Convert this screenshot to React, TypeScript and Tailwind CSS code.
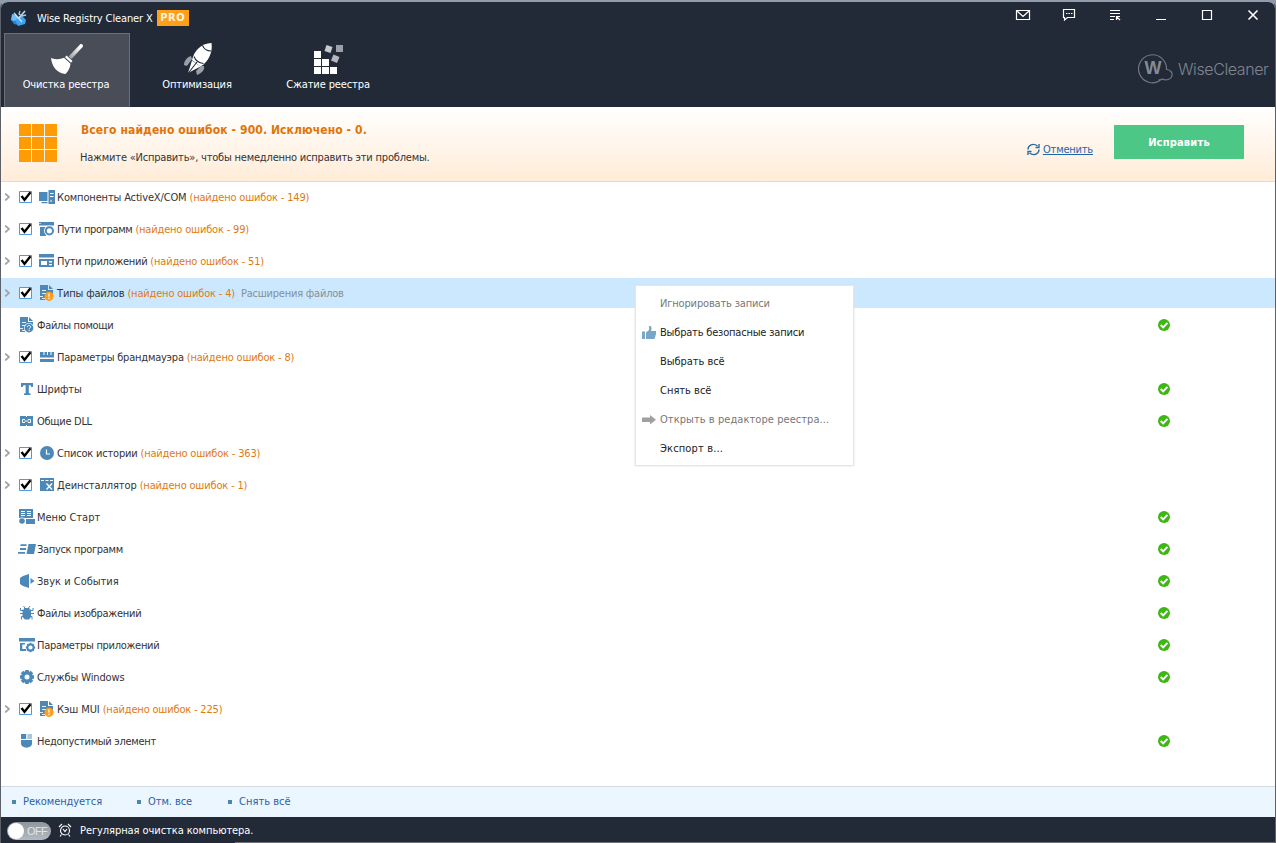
import type { ReactNode } from "react";
import clsx from "clsx";

interface Category {
  id: string;
  label: string;
  labelClass?: string;
  found?: string;
  note?: string;
  selected?: boolean;
}

const categories: Category[] = [
  { id: "activex", label: "Компоненты ActiveX/COM", found: "(найдено ошибок - 149)" },
  { id: "programs", label: "Пути программ", labelClass: "tracking-[-0.35px]", found: "(найдено ошибок - 99)" },
  { id: "apps", label: "Пути приложений", labelClass: "tracking-[-0.28px]", found: "(найдено ошибок - 51)" },
  { id: "filetypes", label: "Типы файлов", found: "(найдено ошибок - 4)", note: "Расширения файлов", selected: true },
  { id: "help", label: "Файлы помощи", labelClass: "tracking-[-0.3px]" },
  { id: "firewall", label: "Параметры брандмауэра", labelClass: "tracking-[-0.22px]", found: "(найдено ошибок - 8)" },
  { id: "fonts", label: "Шрифты", labelClass: "tracking-[-0.1px]" },
  { id: "dll", label: "Общие DLL", labelClass: "tracking-[-0.3px]" },
  { id: "history", label: "Список истории", labelClass: "tracking-[-0.2px]", found: "(найдено ошибок - 363)" },
  { id: "uninstall", label: "Деинсталлятор", labelClass: "tracking-[-0.08px]", found: "(найдено ошибок - 1)" },
  { id: "start", label: "Меню Старт", labelClass: "tracking-[-0.02px]" },
  { id: "startup", label: "Запуск программ", labelClass: "tracking-[-0.32px]" },
  { id: "sound", label: "Звук и События", labelClass: "tracking-[0px]" },
  { id: "images", label: "Файлы изображений", labelClass: "tracking-[-0.26px]" },
  { id: "settings", label: "Параметры приложений", labelClass: "tracking-[-0.3px]" },
  { id: "services", label: "Службы Windows", labelClass: "tracking-[-0.12px]" },
  { id: "mui", label: "Кэш MUI", labelClass: "tracking-[-0.1px]", found: "(найдено ошибок - 225)" },
  { id: "invalid", label: "Недопустимый элемент", labelClass: "tracking-[-0.3px]" },
];

const blue = "#4c89b9";

const docShape = (
  <>
    <path d="M1 0h8v5h5v6H6v4H1z" fill={blue} />
    <path d="M10 0l4 4h-4z" fill={blue} />
    <path d="M3 5.500h4M3 8.500h8M0 11.500h4M3 13.500h3" stroke="#e4f0f8" />
  </>
);

const categoryIcons: Record<string, ReactNode> = {
  activex: (
    <>
      <path d="M0 3h8.500v9H0zM2.500 13h6v1.300h-6zM9.500 1H16v14H9.500z" fill={blue} />
      <path d="M11 4.500h3.500M11 7.500h3.500" stroke="#fff" />
      <path d="M11 12h2" stroke="#fff" />
    </>
  ),
  programs: (
    <>
      <path d="M0 1h15v3.500H0zM1 6h6v9H1z" fill={blue} />
      <path d="M0 2.500h2" stroke="#b5d0e4" />
      <circle cx="10.400" cy="9.800" r="5.400" fill="#fff" />
      <circle cx="10.400" cy="9.800" r="3.600" fill="none" stroke={blue} strokeWidth="2" />
    </>
  ),
  apps: (
    <>
      <path d="M0 1h15v3.500H0zM0 6h15v8H0z" fill={blue} />
      <path d="M2 8h6v4H2zM10 8h3v1.500h-3zM10 11h3v1.200h-3z" fill="#fff" />
    </>
  ),
  filetypes: (
    <>
      {docShape}
      <circle cx="10" cy="11.300" r="4.600" fill="#ff9d1c" />
      <path d="M10 8.600v3.200M10 12.800v1.300" stroke="#fff" strokeWidth="1.200" />
    </>
  ),
  help: (
    <>
      {docShape}
      <circle cx="10" cy="11" r="5" fill="#fff" />
      <circle cx="10" cy="11" r="4.400" fill={blue} />
      <path d="M8.400 10c.1-2.200 3.300-2 3.200 0 0 1-1.500 1.100-1.500 2.200M10.100 12.800V14" stroke="#fff" fill="none" />
    </>
  ),
  firewall: (
    <path d="M1 3h3.500v3h1V3H8v3h1V3h2.500v3h1V3H15v5.500H1zM1 10h14v3H1z" fill={blue} />
  ),
  fonts: (
    <path d="M2 2h12v4h-1.800c0-1.200-.5-1.800-1.600-1.800H9.800V12l1.800.8V14H4.900v-1.200l1.700-.8V4.200H5.400C4.300 4.200 3.800 4.800 3.800 6H2z" fill={blue} />
  ),
  dll: (
    <>
      <path d="M1 3h6v1h1V3h6v10H8v-1H7v1H1z" fill={blue} />
      <path d="M6 6.500H3.500v3H6M9 6.500h2.500v3H9M5.500 8h4" stroke="#fff" fill="none" />
    </>
  ),
  history: (
    <>
      <circle cx="8" cy="8" r="7" fill={blue} />
      <path d="M7.500 4.500V9H11" stroke="#fff" fill="none" strokeWidth="1.200" />
    </>
  ),
  uninstall: (
    <>
      <path d="M1 1h14v13H1z" fill={blue} />
      <path d="M2 3.500h3M6.500 3.500h3M11 3.500h3" stroke="#fff" />
      <path d="M7.500 6.500l5.500 6M13 6.500l-5.500 6" stroke="#fff" strokeWidth="1.400" />
    </>
  ),
  start: (
    <>
      <path d="M0 0h14v9H0z" fill={blue} />
      <path d="M2 2.500h4M2 4.500h4M2 6.500h4M8 2.500h4M8 4.500h4M8 6.500h4" stroke="#fff" />
      <circle cx="3" cy="12" r="3.600" fill="#fff" />
      <circle cx="3" cy="12" r="2.800" fill={blue} />
      <path d="M7 10h9v5H7z" fill={blue} />
    </>
  ),
  startup: (
    <>
      <path d="M9.500 3H17l-2 10H7.500z" fill={blue} />
      <path d="M1.500 4.200h6M1 8h6M-1 11.800h7" stroke={blue} strokeWidth="1.800" />
    </>
  ),
  sound: <path d="M1 5l3-2 6-2v14l-6-2-3-2zM11.500 5l4 3-4 3z" fill={blue} />,
  images: (
    <>
      <path d="M5 3h5.500v1.500H12V12l-2 2.500H6L3.500 12V4.500H5z" fill={blue} />
      <path d="M4.500 1l1.500 2M11 1L9.500 3M1.500 3v2.500h3M14 3v2.500h-3M1 8.500h14M2.500 14.500v-3h2M13 14.500v-3h-2" stroke={blue} fill="none" />
    </>
  ),
  settings: (
    <>
      <path d="M0 1h16v3.500H0zM1 6h2.300v8H1zM1 12h6v2H1z" fill={blue} />
      <path d="M1 6h5v1.500H1z" fill={blue} />
      <circle cx="11.500" cy="10.500" r="3.200" fill="none" stroke={blue} strokeWidth="2.200" />
      <path d="M11.500 5.800v2M11.500 13.300v2M6.800 10.500h2M14.200 10.500h2M8.200 7.200l1 1M14.800 7.200l-1 1M8.200 13.800l1-1M14.800 13.800l-1-1" stroke={blue} strokeWidth="1.500" />
    </>
  ),
  services: (
    <>
      <circle cx="8" cy="8" r="4.200" fill="none" stroke={blue} strokeWidth="3.400" />
      <path d="M8 1v3M8 12v3M1 8h3M12 8h3M3 3l2 2M11 11l2 2M13 3l-2 2M5 11l-2 2" stroke={blue} strokeWidth="3.600" />
    </>
  ),
  invalid: (
    <>
      <path d="M2 1h5.200v5H2z" fill={blue} />
      <path d="M8.400 1H13v5H8.400z" fill="#a6c7df" />
      <path d="M2 7h11v3.500c0 5.500-11 5.500-11 0z" fill={blue} />
    </>
  ),
};
categoryIcons.mui = categoryIcons.filetypes;

function Checkbox() {
  return (
    <svg className="ml-[8px] h-[14px] w-[14px] shrink-0" viewBox="0 0 14 14">
      <path d="M.5 1.500h12v11H.5z" fill="#fff" stroke="#4f97e0" />
      <path d="M2.500 6l3 3.800L11.500 2.300" fill="none" stroke="#000" strokeWidth="2.300" />
    </svg>
  );
}

function CategoryRow({ item }: { item: Category }) {
  return (
    <li className={clsx("mb-[2px] flex h-[30px] items-center", item.selected && "bg-[#cce8ff]")}>
      {item.found ? (
        <div className="flex w-[38px] items-center pl-[3px]">
          <svg className="h-[8px] w-[7px]" viewBox="0 0 7 8">
            <path d="M1.200.5L5 4 1.200 7.500" fill="none" stroke="#a3a3a3" strokeWidth="1.700" />
          </svg>
          <Checkbox />
        </div>
      ) : (
        <div className="w-[18px]" />
      )}
      <svg className="mr-[2px] h-4 w-4 overflow-visible" viewBox="0 0 16 16">
        {categoryIcons[item.id]}
      </svg>
      <span className={clsx("pt-[2px] text-[#333]", item.labelClass ?? "tracking-[-0.15px]")}>{item.label}</span>
      {item.found && <span className="ml-[3px] pt-[2px] tracking-[-0.18px] text-[#e07a10]">{item.found}</span>}
      {item.note && <span className="ml-[6px] pt-[2px] tracking-[-0.22px] text-[#858f99]">{item.note}</span>}
      {!item.found && (
        <svg className="mr-[105px] ml-auto h-[12px] w-[12px]" viewBox="0 0 12 12">
          <circle cx="6" cy="6" r="6" fill="#3fb618" />
          <path d="M2.700 6l2.500 2.500 4.300-4.600" fill="none" stroke="#fff" strokeWidth="1.900" />
        </svg>
      )}
    </li>
  );
}

function BroomIcon() {
  return (
    <svg className="h-[32px] w-[34px]" viewBox="0 0 34 32">
      <defs>
        <linearGradient id="handle" x1="1" y1="0" x2="0" y2="1">
          <stop offset="0.200" stopColor="#fff" />
          <stop offset="1" stopColor="#8d9199" />
        </linearGradient>
      </defs>
      <path d="M18.500 13.500L30 1.500c1.500-1.500 4 .8 2.600 2.500L21.500 16z" fill="url(#handle)" />
      <path d="M16.500 12.500l6 5.500-1.500 1.800-6-5.500z" fill="#fff" />
      <path d="M14 14.800l6.500 6c-.5 4-2 7.500-5 10.200C7.500 30.500 2 24 1 15c5 1.700 9 1.500 13-.2z" fill="#fff" />
    </svg>
  );
}

function RocketIcon() {
  return (
    <svg className="h-[33px] w-[30px]" viewBox="0 0 30 33">
      <path d="M8 14c-4 1-7 5-7 9l3 1 5-7zM21 24c1 4-2 7-7 9l-1-4 5-5z" fill="#9a9ea6" />
      <path d="M28.500 1c1 7-1 15-8 21.500l-3 2-8.500-6.500C11 9 18 1.500 28.500 1z" fill="#fff" />
      <path d="M9 18.500L5 31l12.500-6.500z" fill="#fff" />
      <path d="M19.500 3.500c1.500 3.500 5 5.500 8.500 5.500M11 14.500c1.500 4 5 6.500 9.500 7M14 20L5 31.500" fill="none" stroke="#222a38" strokeWidth="1.100" />
    </svg>
  );
}

function BlocksIcon() {
  return (
    <svg className="h-[30px] w-[30px]" viewBox="0 0 30 30">
      <path d="M0 6h7v7H0zM0 14h7v7H0zM8 14h7v7H8zM0 22h7v7H0zM8 22h7v7H8zM16 22h7v7h-7z" fill="#fff" />
      <path d="M12.500 0l6 2-2 6-6-2z" fill="#c8cacf" />
      <path d="M22 0h7v7h-7z" fill="#9b9fa7" />
      <path d="M19.500 9.500l6 2.500-2.500 6-6-2.500z" fill="#b5b8be" />
    </svg>
  );
}

const tabs = [
  { label: "Очистка реестра", icon: <BroomIcon />, active: true },
  { label: "Оптимизация", icon: <RocketIcon /> },
  { label: "Сжатие реестра", icon: <BlocksIcon /> },
];

const windowControls: { name: string; shape: ReactNode }[] = [
  { name: "mail", shape: <path d="M1.500 3.500h13v9h-13zM2 4l6 5.500L14 4" /> },
  { name: "feedback", shape: <path d="M2.500 2.500h11v8h-7l-3 2.500v-2.500h-1zM5 6.500h1.500M7.500 6.500h1.500M10 6.500h1.500" /> },
  { name: "menu", shape: <path d="M3 3.500h10M3 6.500h10M3 9.500h5M3 12.500h4M9.500 13V9.500H13M10 10l3 3" /> },
  { name: "minimize", shape: <path d="M3 12.500h10" /> },
  { name: "maximize", shape: <path d="M3.500 3.500h9v9h-9z" /> },
  { name: "close", shape: <path d="M3.500 3.500l9 9M12.500 3.500l-9 9" strokeWidth="1.600" /> },
];

function Header() {
  return (
    <header className="flex h-[105px] justify-between bg-[#222a38] text-white">
      <div>
        <div className="flex h-[31px] items-center pl-[10px]">
          <svg className="h-4 w-4" viewBox="0 0 16 16">
            <path d="M0 10l4-5 5 4-2 6-4-1z" fill="#2683dc" />
            <path d="M5 7l6-1 4 4-1 4-7 2-2-4z" fill="#3fa4f0" />
            <path d="M1 4l4 1 2 3-3 3-4-1z" fill="#6cc0f8" />
            <path d="M3 3l8 9M14 1l-7 8" stroke="#c4dff3" strokeWidth="1.500" />
            <path d="M9 1l-1 3 3 2 4-1" fill="none" stroke="#a9cdea" strokeWidth="1.300" />
          </svg>
          <span className="ml-[10px] pt-[2px] tracking-[-0.12px]">Wise Registry Cleaner X</span>
          <span className="ml-[4px] flex h-4 w-8 items-center justify-center bg-[#ff9f1a] text-[11px] font-bold tracking-[0.5px] text-[#fff4dc]">PRO</span>
        </div>
        <nav className="flex gap-[5px] pl-[3px]">
          {tabs.map((tab) => (
            <div
              key={tab.label}
              className={clsx(
                "flex h-[74px] w-[126px] flex-col items-center border",
                tab.active ? "border-[#6a6f79] border-b-[#484d58] bg-[#484d58]" : "border-transparent"
              )}
            >
              <div className="flex h-[41px] items-end">{tab.icon}</div>
              <span className="mt-[2px] mr-[2px] leading-[16px] tracking-[-0.12px]">{tab.label}</span>
            </div>
          ))}
        </nav>
      </div>
      <div className="flex flex-col items-end">
        <div className="flex gap-[30px] pt-[5px] pr-[14px]">
          {windowControls.map((control) => (
            <svg key={control.name} className="h-4 w-4" viewBox="0 0 16 16" fill="none" stroke="#fff" strokeWidth="1.200">
              {control.shape}
            </svg>
          ))}
        </div>
        <div className="mt-[30px] flex items-center pr-[6px]">
          <svg className="h-[31px] w-[36px]" viewBox="0 0 36 31">
            <path
              d="M22.500 27.300A14 14 0 1 1 28.500 16.500c4 .3 6 3 5.500 6-.7 4-6.500 5.500-9.500 3.500-1.500 1.200-3 1-4 .9"
              fill="none"
              stroke="#6f7680"
              strokeWidth="1.200"
            />
            <text x="15" y="21" textAnchor="middle" fontSize="18" fontWeight="700" fill="#858b94" className="font-['Liberation_Sans']">W</text>
          </svg>
          <span className="ml-[4px] w-[91px] font-['Inter'] text-[16px] font-light tracking-[-0.4px] text-[#7f858e]">WiseCleaner</span>
        </div>
      </div>
    </header>
  );
}

function Banner() {
  return (
    <section className="flex h-[75px] border-b border-[#fbd9a0] bg-gradient-to-b from-white to-[#ffecd8] pl-[18px]">
      <div className="mt-[17px] grid h-[38px] w-[38px] grid-cols-3 gap-px">
        {Array.from({ length: 9 }).map((_, i) => (
          <div key={i} className="bg-[#ff9c05]" />
        ))}
      </div>
      <div className="ml-[23px] pt-[14px]">
        <h1 className="pl-px text-[12px] leading-[18px] font-bold tracking-[0.11px] text-[#e0740a]">Всего найдено ошибок - 900. Исключено - 0.</h1>
        <p className="mt-[11px] leading-[16px] tracking-[-0.2px] text-[#333]">Нажмите «Исправить», чтобы немедленно исправить эти проблемы.</p>
      </div>
      <div className="ml-auto flex pr-[31px]">
        <div className="mt-[34px] flex h-4 items-center text-[#1f66a8]">
          <svg className="mr-[3px] h-[13px] w-[13px]" viewBox="0 0 13 13" fill="none" stroke="#2c6c9c" strokeWidth="1.400">
            <path d="M1 6.500C1 2.500 6-.5 10.500 3M12 1v3.500H8.500M12 6.500c0 4-5 7-9.500 3.500M1 12V8.500h3.500" />
          </svg>
          <a className="pt-px tracking-[-0.2px] underline">Отменить</a>
        </div>
        <button className="mt-[18px] ml-[21px] h-[34px] w-[130px] bg-[#4dc786] pt-px text-[11px] font-bold tracking-[0.2px] text-white">Исправить</button>
      </div>
    </section>
  );
}

const menuItems = [
  { label: "Игнорировать записи", disabled: true, spacing: "tracking-[-0.16px]" },
  { label: "Выбрать безопасные записи", icon: "like", spacing: "tracking-[-0.19px]" },
  { label: "Выбрать всё", spacing: "tracking-[-0.05px]" },
  { label: "Снять всё", spacing: "tracking-[0px]" },
  { label: "Открыть в редакторе реестра...", icon: "arrow", disabled: true, spacing: "tracking-[0.06px]" },
  { label: "Экспорт в...", spacing: "tracking-[0.14px]" },
];

function ContextMenu() {
  return (
    <ul className="absolute top-[103px] left-[634px] h-[181px] w-[219px] border border-[#e4e6e8] bg-white pt-[3px] shadow-[0_0_2px_#d8dce0]">
      {menuItems.map((item) => (
        <li key={item.label} className="flex h-[29px] items-center pl-[6px]">
          <svg className="mr-[4px] h-[14px] w-[14px]" viewBox="0 0 14 14">
            {item.icon === "like" && (
              <path d="M0 5.500h3V13H0zM4 6.500L7 4V0h1.500C10 1 9.500 3.500 9 5h5v3l-1.500 5H4z" fill="#79a6c6" />
            )}
            {item.icon === "arrow" && <path d="M0 4.500h8V2l6 4.700-6 4.800V9H0z" fill="#a0a0a0" />}
          </svg>
          <span className={clsx(item.spacing, item.disabled ? "text-[#777]" : "text-[#222]")}>{item.label}</span>
        </li>
      ))}
    </ul>
  );
}

function Footer() {
  return (
    <footer className="bg-[#222a38] text-white">
      <div className="flex h-[25px] items-center pt-px pl-[6px]">
        <div className="mt-[2px] flex h-[18px] w-[44px] items-center rounded-full bg-gradient-to-b from-[#8f969f] to-[#b4bac1] pl-[1px]">
          <span className="h-4 w-4 rounded-full bg-white" />
          <span className="ml-[3px] font-['Liberation_Sans'] text-[11px] text-[#e3e6e9] tracking-[-0.6px]">OFF</span>
        </div>
        <svg className="ml-[7px] h-[14px] w-[14px]" viewBox="0 0 14 14" fill="none" stroke="#fff" strokeWidth="1.100">
          <circle cx="7" cy="7.500" r="4.500" />
          <path d="M1 4l3-3M13 4l-3-3M3.500 11.500L2 13.500M10.500 11.500l1.500 2M5 6l2 2.500L9 6" />
        </svg>
        <span className="ml-[8px] pt-px tracking-[-0.07px]">Регулярная очистка компьютера.</span>
      </div>
      <div className="ml-[234px] h-px bg-[#6d727a]" />
    </footer>
  );
}

export default function App() {
  return (
    <div className="h-[843px] w-[1276px] bg-[#919ba9] font-['DejaVu_Sans_Condensed','DejaVu_Sans',sans-serif] text-[11px] leading-[16px] whitespace-nowrap [font-stretch:condensed]">
      <div className="flex h-[843px] flex-col overflow-hidden rounded-t-lg border-x border-t-2 border-x-[#5c6067] border-t-[#919ba9] bg-white">
        <Header />
        <Banner />
        <main className="relative grow">
          <ul>
            {categories.map((item) => (
              <CategoryRow key={item.id} item={item} />
            ))}
          </ul>
          <ContextMenu />
        </main>
        <div className="flex h-[31px] items-center border-t border-[#d2d8dd] bg-[#ecf6fe] pl-[11px] tracking-[-0.08px] text-[#2b5fa8]">
          <span className="mr-[7px] h-1 w-1 bg-[#4a86ad]" />
          <a>Рекомендуется</a>
          <span className="mr-[7px] ml-[35px] h-1 w-1 bg-[#4a86ad]" />
          <a>Отм. все</a>
          <span className="mr-[7px] ml-[36px] h-1 w-1 bg-[#4a86ad]" />
          <a className="tracking-[0.02px]">Снять всё</a>
        </div>
        <Footer />
      </div>
    </div>
  );
}
